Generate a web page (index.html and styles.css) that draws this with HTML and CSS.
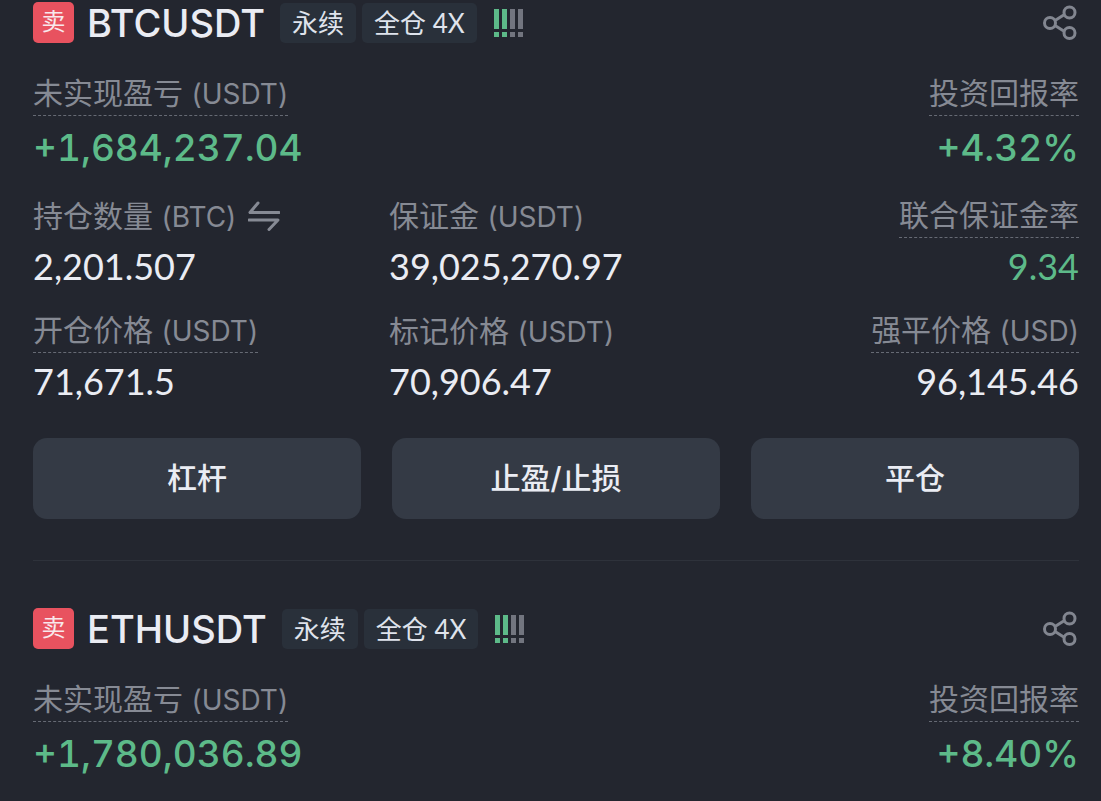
FILE: index.html
```html
<!DOCTYPE html>
<html lang="zh-CN">
<head>
  <meta charset="UTF-8" />
  <meta name="viewport" content="width=device-width, initial-scale=1.0" />
  <title>持仓</title>
  <link rel="stylesheet" href="styles.css">
</head>
<body>
  <main class="positions">
    <article class="position">
      <header class="position-header">
        <span class="side">卖</span>
        <h2 class="symbol">BTCUSDT</h2>
        <div class="tags">
          <span class="tag">永续</span>
          <span class="tag">全仓 4X</span>
        </div>
        <svg class="risk" viewBox="0 0 30 28" aria-hidden="true">
          <path class="risk-on" d="M0 0h5v20H0zM0 23h5v5H0zM8 0h5v20H8zM8 23h5v5H8z" />
          <path class="risk-off" d="M16 0h5v20h-5zM16 23h5v5h-5zM24 0h5v20h-5zM24 23h5v5h-5z" />
        </svg>
        <button class="share" type="button" aria-label="分享">
          <svg viewBox="0 0 36 36">
            <path d="M12 15.500L21.500 9.500M12 20.500L21.500 26.500" />
            <circle cx="7" cy="18" r="5.500" />
            <circle cx="26.500" cy="7.500" r="5.500" />
            <circle cx="26.500" cy="28" r="5.500" />
          </svg>
        </button>
      </header>

      <dl class="summary">
        <div class="field">
          <dt><span class="hint">未实现盈亏 <span class="unit">(USDT)</span></span></dt>
          <dd class="profit">+1,684,237.04</dd>
        </div>
        <div class="field right">
          <dt><span class="hint">投资回报率</span></dt>
          <dd class="profit">+4.32%</dd>
        </div>
      </dl>

      <dl class="details">
        <div class="field">
          <dt>
            <span>持仓数量 <span class="unit">(BTC)</span></span>
            <button class="swap" type="button" aria-label="切换单位">
              <svg viewBox="0 0 32 30"><path d="M10 2L2 11.500H31M1 19H30L21 28.500" /></svg>
            </button>
          </dt>
          <dd>2,201.507</dd>
        </div>
        <div class="field">
          <dt><span>保证金 <span class="unit">(USDT)</span></span></dt>
          <dd>39,025,270.97</dd>
        </div>
        <div class="field right">
          <dt><span class="hint">联合保证金率</span></dt>
          <dd class="safe">9.34</dd>
        </div>
        <div class="field">
          <dt><span class="hint">开仓价格 <span class="unit">(USDT)</span></span></dt>
          <dd>71,671.5</dd>
        </div>
        <div class="field">
          <dt><span>标记价格 <span class="unit">(USDT)</span></span></dt>
          <dd>70,906.47</dd>
        </div>
        <div class="field right">
          <dt><span class="hint">强平价格 <span class="unit">(USD)</span></span></dt>
          <dd>96,145.46</dd>
        </div>
      </dl>

      <div class="actions">
        <button class="action" type="button">杠杆</button>
        <button class="action" type="button">止盈/止损</button>
        <button class="action" type="button">平仓</button>
      </div>
    </article>

    <article class="position">
      <header class="position-header">
        <span class="side">卖</span>
        <h2 class="symbol">ETHUSDT</h2>
        <div class="tags">
          <span class="tag">永续</span>
          <span class="tag">全仓 4X</span>
        </div>
        <svg class="risk" viewBox="0 0 30 28" aria-hidden="true">
          <path class="risk-on" d="M0 0h5v20H0zM0 23h5v5H0zM8 0h5v20H8zM8 23h5v5H8z" />
          <path class="risk-off" d="M16 0h5v20h-5zM16 23h5v5h-5zM24 0h5v20h-5zM24 23h5v5h-5z" />
        </svg>
        <button class="share" type="button" aria-label="分享">
          <svg viewBox="0 0 36 36">
            <path d="M12 15.500L21.500 9.500M12 20.500L21.500 26.500" />
            <circle cx="7" cy="18" r="5.500" />
            <circle cx="26.500" cy="7.500" r="5.500" />
            <circle cx="26.500" cy="28" r="5.500" />
          </svg>
        </button>
      </header>

      <dl class="summary">
        <div class="field">
          <dt><span class="hint">未实现盈亏 <span class="unit">(USDT)</span></span></dt>
          <dd class="profit">+1,780,036.89</dd>
        </div>
        <div class="field right">
          <dt><span class="hint">投资回报率</span></dt>
          <dd class="profit">+8.40%</dd>
        </div>
      </dl>
    </article>
  </main>
</body>
</html>
```
FILE: styles.css
```css
* {
  box-sizing: border-box;
}

body {
  margin: 0;
  background: #23262f;
  color: #eaecf3;
  font-family: Inter, 'Noto Sans CJK SC', sans-serif;
}

button {
  padding: 0;
  border: none;
  background: none;
  color: inherit;
  font-family: inherit;
  cursor: pointer;
}

svg {
  display: block;
}

.positions {
  padding: 2px 22px 0 33px;
}

.position + .position {
  margin-top: 41px;
  padding-top: 47px;
  border-top: 1px solid #2e323b;
}

.position-header {
  display: flex;
  align-items: center;
  height: 41px;
}

.side {
  width: 41px;
  height: 41px;
  border-radius: 5px;
  background: #e8525f;
  color: #f8e8ec;
  font-size: 24px;
  line-height: 40px;
  text-align: center;
}

.symbol {
  margin: 0 15px 0 13px;
  font-size: 38px;
  font-weight: 500;
  line-height: 38px;
}

.tags {
  display: flex;
  gap: 6px;
}

.tag {
  padding: 0 12px;
  border-radius: 5px;
  background: #29303a;
  color: #dfe3ec;
  font-family: Lato, 'Noto Sans CJK SC', sans-serif;
  font-size: 26px;
  line-height: 40px;
}

.risk {
  width: 30px;
  height: 28px;
  margin-left: 17px;
}

.risk-on {
  fill: #5dba89;
}

.risk-off {
  fill: #72757f;
}

.share {
  margin-left: auto;
}

.share svg {
  width: 36px;
  height: 36px;
  fill: none;
  stroke: #828690;
  stroke-width: 3;
}

dl,
dd {
  margin: 0;
}

.summary {
  display: flex;
  justify-content: space-between;
  margin-top: 29px;
}

.details {
  display: grid;
  grid-template-columns: repeat(3, 1fr);
  gap: 19px 22px;
  margin-top: 22px;
}

.right {
  text-align: right;
}

.right dt {
  justify-content: flex-end;
}

dt {
  display: flex;
  align-items: center;
  gap: 12px;
  height: 44px;
  color: #868a94;
  font-size: 30px;
  line-height: 43px;
  white-space: nowrap;
}

.unit {
  font-size: 28px;
  line-height: 28px;
}

.hint {
  border-bottom: 1px dashed #666a74;
}

dd {
  margin-top: 4px;
  font-family: Lato, sans-serif;
  font-size: 36px;
  line-height: 48px;
}

.profit {
  margin-top: 8px;
  color: #5dba89;
  font-family: Inter, sans-serif;
  font-size: 37px;
  font-weight: 500;
  font-variant-numeric: tabular-nums;
}

.safe {
  color: #5dba89;
}

.swap svg {
  width: 32px;
  height: 30px;
  fill: none;
  stroke: #868a94;
  stroke-width: 3;
  stroke-linecap: round;
  stroke-linejoin: round;
}

.actions {
  display: grid;
  grid-template-columns: repeat(3, 1fr);
  gap: 31px;
  margin-top: 33px;
}

.action {
  height: 81px;
  padding-bottom: 5px;
  border-radius: 14px;
  background: #343a45;
  font-size: 30px;
  font-weight: 500;
}
```
